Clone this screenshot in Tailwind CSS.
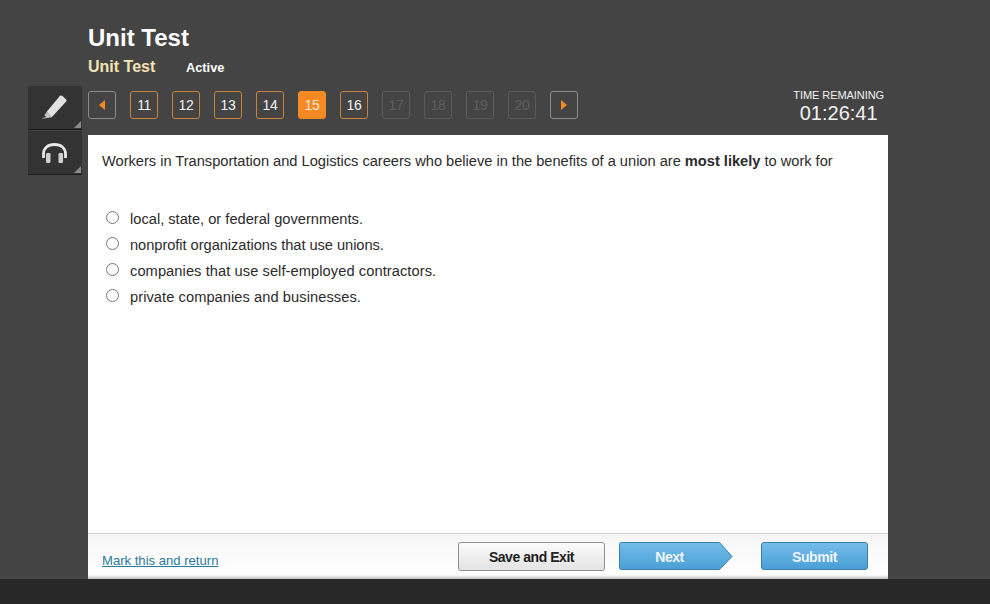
<!DOCTYPE html>
<html lang="en">
<head>
<meta charset="UTF-8">
<title>Unit Test</title>
<script src="https://cdn.jsdelivr.net/npm/@tailwindcss/browser@4"></script>
</head>
<body class="bg-[#444444] font-['Liberation_Sans',Arial,sans-serif] text-[#2b2b2b] h-[604px] w-[990px] overflow-hidden flex flex-col">
    <!-- Header -->
    <header class="pl-[88px] pt-[23px] h-[86px] shrink-0">
        <h1 class="text-[24px] leading-[30px] font-bold text-white">Unit Test</h1>
        <div class="flex items-center mt-[4px] h-[20px]">
            <span class="text-[16px] font-bold text-[#f3e3b3] w-[98px]">Unit Test</span>
            <span class="text-[12.8px] font-bold text-white mt-[2px]">Active</span>
        </div>
    </header>

    <div class="flex h-[493px] shrink-0">
        <!-- Tools -->
        <aside class="w-[88px] pl-[28px] shrink-0">
            <button class="relative block w-[54px] h-[44px] bg-[#333333] border-b border-[#1c1c1c]">
                <svg class="absolute left-[14px] top-[8px] w-[26px] h-[26px]" viewBox="0 0 26 26">
                    <path d="M18 1.7 Q19.5 1 20.5 2 L24.2 5.5 Q25 6.5 24.4 7.2 L9.7 23.3 L4.7 17.7 Z" fill="#e2e2e2"/>
                    <path d="M4.7 17.7 L9.7 23.3 L0.3 24.7 Z" fill="#c4c4c4"/>
                    <path d="M2.2 21 L4 23 L1 24.3 Z" fill="#2e2e2e"/>
                </svg>
                <span class="absolute right-[1px] bottom-[1px] w-0 h-0 border-l-[7px] border-l-transparent border-b-[7px] border-b-[#8a8a8a]"></span>
            </button>
            <button class="relative block w-[54px] h-[44px] mt-[1px] bg-[#333333] border-b border-[#1c1c1c]">
                <svg class="absolute left-[14px] top-[12px] w-[25px] h-[20px]" viewBox="0 0 25 20">
                    <path d="M1.5 15 V11 C1.5 5 6 1.5 12.5 1.5 C19 1.5 23.5 5 23.5 11 V15" fill="none" stroke="#e8e8e8" stroke-width="2.8"/>
                    <rect x="4" y="10" width="4.5" height="10" rx="1.2" fill="#cfcfcf"/>
                    <rect x="16.5" y="10" width="4.5" height="10" rx="1.2" fill="#cfcfcf"/>
                </svg>
                <span class="absolute right-[1px] bottom-[1px] w-0 h-0 border-l-[7px] border-l-transparent border-b-[7px] border-b-[#8a8a8a]"></span>
            </button>
        </aside>

        <div class="w-[800px] flex flex-col">
            <!-- Question nav -->
            <nav class="h-[49px] shrink-0 flex items-start pt-[5px] relative">
                <div class="flex gap-[14px] text-[14px] tracking-[-0.4px] leading-[26px] text-center">
                    <button class="w-[28px] h-[28px] rounded-[3px] border border-[#8c8c8c] flex items-center justify-center">
                        <span class="w-0 h-0 border-y-[5px] border-y-transparent border-r-[6px] border-r-[#f58a25]"></span>
                    </button>
                    <button class="w-[28px] h-[28px] rounded-[3px] border border-[#c8843c] text-[#f2f2f2]">11</button>
                    <button class="w-[28px] h-[28px] rounded-[3px] border border-[#c8843c] text-[#f2f2f2]">12</button>
                    <button class="w-[28px] h-[28px] rounded-[3px] border border-[#c8843c] text-[#f2f2f2]">13</button>
                    <button class="w-[28px] h-[28px] rounded-[3px] border border-[#c8843c] text-[#f2f2f2]">14</button>
                    <button class="w-[28px] h-[28px] rounded-[3px] border border-[#f58a25] bg-[#f58a25] text-[#fbe9d6]">15</button>
                    <button class="w-[28px] h-[28px] rounded-[3px] border border-[#c8843c] text-[#f2f2f2]">16</button>
                    <button class="w-[28px] h-[28px] rounded-[3px] border border-[#5c5c5c] text-[#5e5e5e]">17</button>
                    <button class="w-[28px] h-[28px] rounded-[3px] border border-[#5c5c5c] text-[#5e5e5e]">18</button>
                    <button class="w-[28px] h-[28px] rounded-[3px] border border-[#5c5c5c] text-[#5e5e5e]">19</button>
                    <button class="w-[28px] h-[28px] rounded-[3px] border border-[#5c5c5c] text-[#5e5e5e]">20</button>
                    <button class="w-[28px] h-[28px] rounded-[3px] border border-[#8c8c8c] flex items-center justify-center">
                        <span class="w-0 h-0 border-y-[5px] border-y-transparent border-l-[6px] border-l-[#f58a25]"></span>
                    </button>
                </div>
                <div class="ml-auto mr-[4px] text-center text-[#f2f2f2]">
                    <div class="text-[11px] leading-[13px] mt-[-2px] tracking-[-0.07px]">TIME REMAINING</div>
                    <div class="text-[20px] leading-[23px]">01:26:41</div>
                </div>
            </nav>

            <!-- Question -->
            <main class="flex-1 bg-white flex flex-col min-h-0">
                <div class="flex-1 px-[14px] pt-[18px] text-[14.67px] leading-[17px]">
                    <p class="tracking-[-0.02px]">Workers in Transportation and Logistics careers who believe in the benefits of a union are <strong class="font-bold">most likely</strong> to work for</p>
                    <div class="mt-[36px] pl-[4px]">
                        <label class="flex items-center h-[26px]"><input type="radio" name="q" class="w-[13px] h-[13px] mr-[11px] mt-[-3px] shrink-0"><span>local, state, or federal governments.</span></label>
                        <label class="flex items-center h-[26px]"><input type="radio" name="q" class="w-[13px] h-[13px] mr-[11px] mt-[-3px] shrink-0"><span class="tracking-[-0.05px]">nonprofit organizations that use unions.</span></label>
                        <label class="flex items-center h-[26px]"><input type="radio" name="q" class="w-[13px] h-[13px] mr-[11px] mt-[-3px] shrink-0"><span class="tracking-[0.07px]">companies that use self-employed contractors.</span></label>
                        <label class="flex items-center h-[26px]"><input type="radio" name="q" class="w-[13px] h-[13px] mr-[11px] mt-[-3px] shrink-0"><span class="tracking-[0.06px]">private companies and businesses.</span></label>
                    </div>
                </div>

                <!-- Footer -->
                <footer class="h-[46px] shrink-0 border-t border-[#d2d2d2] bg-gradient-to-b from-[#f6f6f6] to-[#ffffff] flex items-start px-[14px] relative">
                    <a href="#" class="text-[13.1px] leading-[16px] text-[#2a7a9a] underline mt-[19px]">Mark this and return</a>
                    <div class="ml-auto flex items-start mt-[8px] mr-[6px]">
                        <button class="w-[147px] h-[29px] rounded-[3px] border border-[#8f8f8f] bg-gradient-to-b from-[#fbfbfb] to-[#e4e4e4] text-[14px] tracking-[-0.45px] leading-[29px] font-bold text-[#222222]">Save and Exit</button>
                        <svg class="ml-[14px] w-[114px] h-[29px]" viewBox="0 0 114 29">
                            <defs><linearGradient id="g" x1="0" y1="0" x2="0" y2="1"><stop offset="0" stop-color="#74bdea"/><stop offset="1" stop-color="#4a9fd6"/></linearGradient></defs>
                            <path d="M2.5 0.5 H100.5 L113 14.5 L100.5 27.5 H2.5 Q0.5 27.5 0.5 25.5 V2.5 Q0.5 0.5 2.5 0.5 Z" fill="url(#g)" stroke="#3b7ea8"/>
                            <text x="50.5" y="19.5" text-anchor="middle" font-family="Liberation Sans" font-size="14" letter-spacing="-0.5" font-weight="700" fill="#eef6fb">Next</text>
                        </svg>
                        <button class="ml-[28px] w-[107px] h-[28px] rounded-[3px] border border-[#3b7ea8] bg-gradient-to-b from-[#74bdea] to-[#4a9fd6] text-[14px] tracking-[-0.4px] leading-[28px] font-bold text-[#eef6fb]">Submit</button>
                    </div>
                    <div class="absolute left-0 right-0 bottom-0 h-[4px] bg-gradient-to-b from-transparent to-[#bdbdbd]"></div>
                </footer>
            </main>
        </div>
    </div>

    <!-- Bottom bar -->
    <div class="h-[25px] shrink-0 bg-[#282828]"></div>
</body>
</html>
